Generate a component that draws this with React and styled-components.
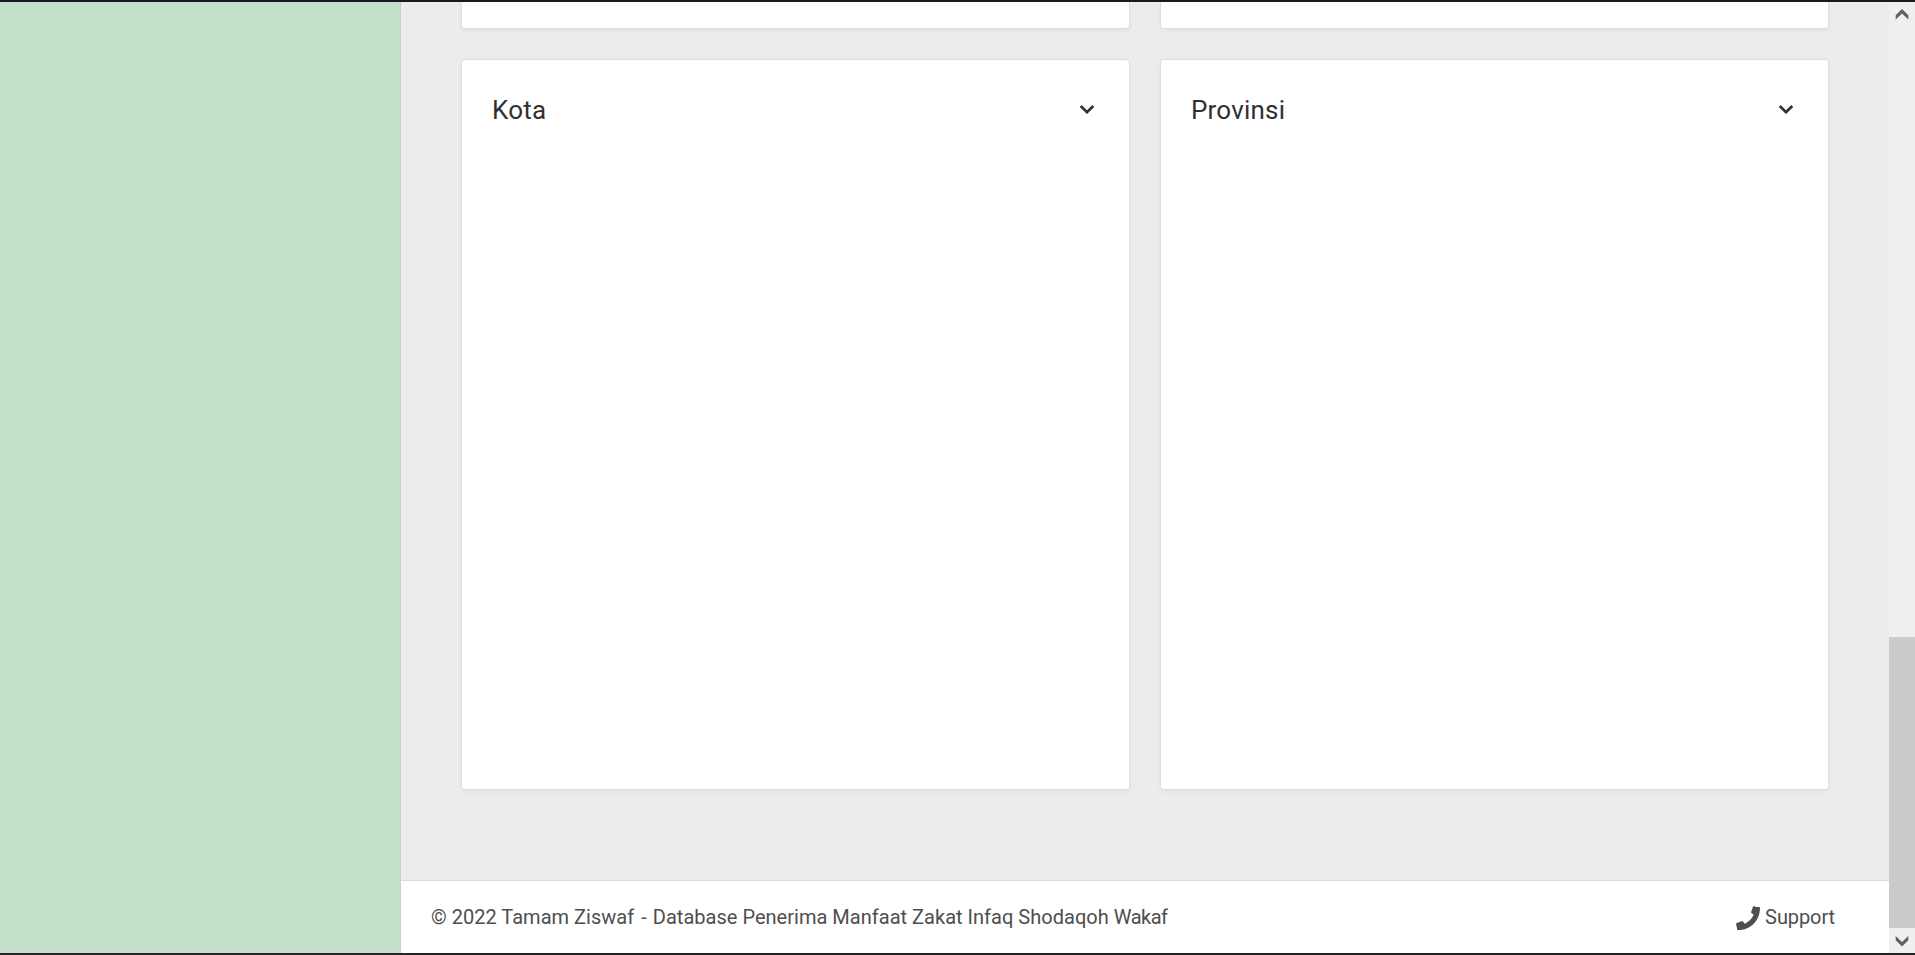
import React from "react";
import styled, { createGlobalStyle } from "styled-components";

const GlobalStyle = createGlobalStyle`
  * { box-sizing: border-box; }
  html, body { margin: 0; overflow: hidden; }
  body { font-family: Roboto, "Liberation Sans", sans-serif; background: #ececec; }
`;

const Frame = styled.div`
  display: flex;
  width: 1915px;
  height: 955px;
  border-top: 2px solid #1b1822;
  border-bottom: 2px solid #222326;
  overflow: hidden;
`;

const Sidebar = styled.aside`
  flex: 0 0 401px;
  background: #c3e0cb;
  border-right: 1px solid #cccfcd;
`;

const Main = styled.main`
  flex: 1;
  display: flex;
  flex-direction: column;
  background: #ececec;
`;

const Content = styled.section`
  flex: 1;
  display: grid;
  grid-template-columns: 669px 669px;
  grid-template-rows: 27px 731px;
  column-gap: 30px;
  row-gap: 30px;
  padding-left: 60px;
`;

const Card = styled.article`
  background: #fff;
  background-clip: padding-box;
  border: 1px solid rgba(0, 0, 0, 0.035);
  border-top: ${(p) => (p.$cut ? "0" : "1px solid rgba(0, 0, 0, 0.06)")};
  border-radius: ${(p) => (p.$cut ? "0 0 4px 4px" : "4px")};
  box-shadow: 0 2px 5px rgba(0, 0, 0, 0.04);
`;

const CardHeader = styled.header`
  display: flex;
  align-items: center;
  justify-content: space-between;
  height: 99px;
  padding: 0 35px 0 30px;
`;

const CardTitle = styled.h2`
  margin: 0;
  padding-top: 1px;
  font-size: 26px;
  font-weight: 400;
  line-height: 32px;
  letter-spacing: 0.2px;
  color: #303030;
`;

const Footer = styled.footer`
  display: flex;
  align-items: center;
  justify-content: space-between;
  height: 73px;
  padding: 0 54px 0 30px;
  border-top: 1px solid #dcdcdc;
  background: #fff;
  color: #4e4e4e;
  font-size: 20px;
  line-height: 24px;
`;

const Copyright = styled.span`
  letter-spacing: 0.02px;
`;

const Dash = styled.span`
  margin: 0 1px 0 2px;
`;

const LastWord = styled.span`
  letter-spacing: -0.5px;
`;

const Support = styled.a`
  display: flex;
  align-items: center;
  gap: 5px;
  letter-spacing: -0.1px;
`;

const PhoneIcon = styled.svg`
  width: 24px;
  height: 24px;
  margin-top: 2px;
  fill: currentColor;
`;

const Scrollbar = styled.div`
  flex: 0 0 26px;
  display: flex;
  flex-direction: column;
  background: #efefef;
`;

const ScrollButton = styled.div`
  flex: 0 0 25px;
  display: flex;
  align-items: center;
  justify-content: center;
  padding-top: ${(p) => (p.$end ? "2px" : "0")};
`;

const Track = styled.div`
  flex: 1;
  display: flex;
  align-items: flex-end;
`;

const Thumb = styled.div`
  width: 100%;
  height: 291px;
  background: #cbcbcb;
`;

const Chevron = () => (
  <svg width="14" height="9" viewBox="0 0 14 9" fill="none" stroke="#303030" strokeWidth="2.7">
    <path d="M.7 1 7 7.1 13.3 1" />
  </svg>
);

const Arrow = ({ up }) => (
  <svg width="14" height="11" viewBox="0 0 14 11" fill="#606060">
    <path d={up ? "M7 0 13.3 6.3V10.5L7 4.5.7 10.5V6.3Z" : "M7 10.5 13.3 4.2V0L7 6 .7 0V4.2Z"} />
  </svg>
);

const Panel = ({ title }) => (
  <Card>
    <CardHeader>
      <CardTitle>{title}</CardTitle>
      <Chevron />
    </CardHeader>
  </Card>
);

export default function App() {
  return (
    <>
      <GlobalStyle />
      <Frame>
        <Sidebar />
        <Main>
          <Content>
            <Card $cut />
            <Card $cut />
            <Panel title="Kota" />
            <Panel title="Provinsi" />
          </Content>
          <Footer>
            <Copyright>
              © 2022 Tamam Ziswaf <Dash>-</Dash> Database Penerima Manfaat Zakat Infaq Shodaqoh{" "}
              <LastWord>Wakaf</LastWord>
            </Copyright>
            <Support>
              <PhoneIcon viewBox="0 0 24 24">
                <path d="M17 .7Q17.2 0 18 .1L19 .4Q20 1.2 21 1.1L23.2 1Q24 1 24 1.9C24 14.5 14.5 24 2 24Q1 24 1 23.2L.9 21.5Q.8 20.6.3 19.4L0 18Q0 17.1.8 16.9L5.7 15.2Q6.5 15 7 15.5L8.8 17.7C12.8 15.9 16 12.8 17.7 8.8L15.5 7Q14.9 6.5 15.2 5.7Z" />
              </PhoneIcon>
              <span>Support</span>
            </Support>
          </Footer>
        </Main>
        <Scrollbar>
          <ScrollButton><Arrow up /></ScrollButton>
          <Track><Thumb /></Track>
          <ScrollButton $end><Arrow /></ScrollButton>
        </Scrollbar>
      </Frame>
    </>
  );
}
